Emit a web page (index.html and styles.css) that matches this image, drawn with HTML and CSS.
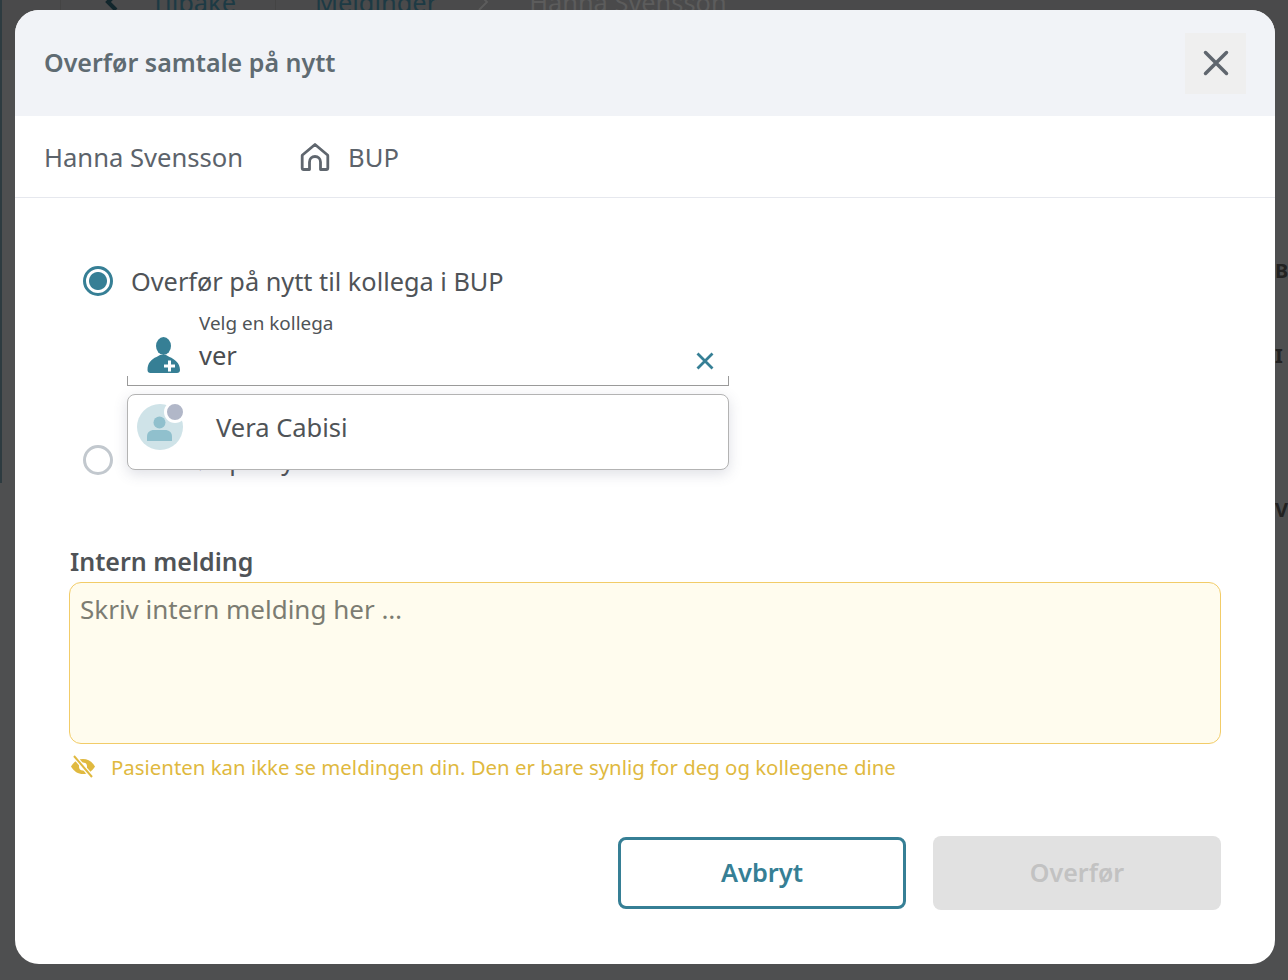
FILE: index.html
```html
<!DOCTYPE html>
<html lang="no">
<head>
<meta charset="utf-8">
<title>Overfør samtale på nytt</title>
<link rel="stylesheet" href="styles.css">
</head>
<body>
<div class="backdrop-page">
  <div class="topband"></div>
  <div class="rail"></div>
  <nav class="crumbs">
    <span class="crumb-back"><svg width="14" height="20" viewBox="0 0 14 20"><path d="M11 2 3 10l8 8" fill="none" stroke="#12262c" stroke-width="4"/></svg>Tilbake</span>
    <span>Meldinger</span>
    <svg width="14" height="20" viewBox="0 0 14 20"><path d="M3 2l8 8-8 8" fill="none" stroke="#5c5c5c" stroke-width="2"/></svg>
    <span class="crumb-muted">Hanna Svensson</span>
  </nav>
  <div class="side-glyphs"><span class="g1">Bi</span><span class="g2">I</span><span class="g3">V</span></div>
</div>
<div class="dialog">
  <header class="head">
    <h1 class="title">Overfør samtale på nytt</h1>
    <button class="close" aria-label="Lukk"><svg width="26" height="26" viewBox="0 0 26 26"><path d="M2.500 2.500l21 21M23.500 2.500l-21 21" stroke="#5f666e" stroke-width="3.500" stroke-linecap="round"/></svg></button>
  </header>
  <div class="info">
    <span class="patient">Hanna Svensson</span>
    <span class="unit"><svg width="30" height="30" viewBox="0 0 30 30"><path d="M15 2.500 27.500 13a1 1 0 0 1 .3.700V26a1.500 1.500 0 0 1-1.500 1.500H20.500V20a5.500 5.500 0 0 0-11 0v7.500H3.700A1.500 1.500 0 0 1 2.200 26V13.700a1 1 0 0 1 .3-.7z" fill="none" stroke="#5f666e" stroke-width="2.800" stroke-linejoin="round"/></svg>BUP</span>
  </div>
  <div class="body">
    <div class="options">
      <label class="option"><span class="radio on"></span><span>Overfør på nytt til kollega i BUP</span></label>
      <div class="picker">
        <div class="field">
          <svg class="doc" width="34" height="36" viewBox="0 0 34 36"><ellipse cx="16.500" cy="9" rx="7.500" ry="9" fill="#367f95"/><path d="M.5 33c0-7 4-11 9-13l3.500-2h6l3.500 2c5 2 10.500 6 10.500 13 0 1.800-1.200 3-3 3H3.500c-1.800 0-3-1.200-3-3z" fill="#367f95"/><path d="M22.500 23.500v11M17 29h11" stroke="#fff" stroke-width="3"/></svg>
          <div class="field-text"><span class="field-label">Velg en kollega</span><span class="field-value">ver</span></div>
          <svg class="clear" width="20" height="20" viewBox="0 0 20 20"><path d="M2.500 2.500l15 15M17.500 2.500l-15 15" stroke="#367f95" stroke-width="2.800"/></svg>
        </div>
        <div class="menu">
          <div class="avatar"><svg width="46" height="46" viewBox="0 0 46 46"><circle cx="23" cy="23" r="23" fill="#cfe3e8"/><circle cx="22.500" cy="18.500" r="6" fill="#90c0cd"/><path d="M10 37v-4c0-5 3-7 7-7h11c4 0 7 2 7 7v4z" fill="#90c0cd"/></svg><span class="status"></span></div>
          <span>Vera Cabisi</span>
        </div>
      </div>
      <label class="option second"><span class="radio"></span><span>Overfør på nytt til enhet</span></label>
    </div>
    <section class="note">
      <h2 class="note-title">Intern melding</h2>
      <textarea class="note-input" placeholder="Skriv intern melding her …"></textarea>
      <p class="note-hint"><svg width="26" height="26" viewBox="0 0 26 26"><path d="M1 12.500C4 7.500 8 5 13 5s9 2.500 12 7.500C22 17.500 18 20 13 20S4 17.500 1 12.500z" fill="#e0b93f"/><circle cx="13" cy="12.500" r="4" fill="#fff"/><path d="M4 2l18 21" stroke="#fff" stroke-width="4.500"/><path d="M4 2l18 21" stroke="#e0b93f" stroke-width="2"/></svg>Pasienten kan ikke se meldingen din. Den er bare synlig for deg og kollegene dine</p>
    </section>
    <div class="actions">
      <button class="btn ghost">Avbryt</button>
      <button class="btn off">Overfør</button>
    </div>
  </div>
</div>
</body>
</html>
```
FILE: styles.css
```css
* { box-sizing: border-box; }
html, body { margin: 0; height: 100%; }
body {
  width: 1288px;
  height: 980px;
  overflow: hidden;
  background: #4e4f50;
  font-family: "Noto Sans", "Open Sans", sans-serif;
  color: #4f5357;
  position: relative;
  padding: 10px 13px 16px 15px;
}
.backdrop-page { position: absolute; inset: 0; overflow: hidden; }
.topband { position: absolute; left: 0; top: 0; right: 0; height: 60px; background: #4a4a4b; }
.rail { position: absolute; left: 0; top: 0; bottom: 497px; width: 2px; background: #2d3b40; }
.crumbs {
  position: absolute; left: 60px; top: -10px; height: 24px;
  display: flex; align-items: center; gap: 39px;
  font-size: 25.400px; color: #1d3a44;
}
.crumb-back { display: flex; align-items: center; gap: 32px; padding: 0 39px 0 44px; border-left: 1px solid #444; border-right: 1px solid #444; }
.crumb-muted { color: #5c5c5c; }
.side-glyphs { position: absolute; left: 1275px; top: 0; font-size: 20px; color: #222; font-weight: 700; }
.side-glyphs span { position: absolute; left: 0; }
.g1 { top: 257px; }
.g2 { top: 342px; }
.g3 { top: 496px; }

.dialog {
  position: relative;
  width: 1260px;
  height: 954px;
  background: #fff;
  border-radius: 24px;
  overflow: hidden;
  display: flex;
  flex-direction: column;
}
.head {
  height: 106px;
  flex: none;
  background: #f1f3f7;
  display: flex;
  align-items: center;
  justify-content: space-between;
  padding: 0 29px;
}
.title { margin: 0 0 2px; font-size: 25px; line-height: 34px; font-weight: 600; color: #5f6b72; }
.close {
  width: 61px; height: 61px; padding: 0; border: 0; background: #efefef;
  display: flex; align-items: center; justify-content: center;
}
.info {
  height: 82px; flex: none;
  border-bottom: 1px solid #e6e8ee;
  display: flex; align-items: center; gap: 57px;
  padding: 2px 29px 0;
  font-size: 25.600px; color: #5c636b;
}
.unit { display: flex; align-items: center; gap: 18px; }
.unit svg { margin-top: -2px; }
.body { flex: 1; padding: 65px 54px 54px; display: flex; flex-direction: column; }
.options { position: relative; padding-left: 14px; height: 281px; flex: none; }
.option { display: flex; align-items: center; gap: 18px; font-size: 25.300px; line-height: 36px; color: #4f5357; }
.radio { width: 30px; height: 30px; border-radius: 50%; border: 3.500px solid #c2c8ce; flex: none; background: #fff; }
.radio.on { border-color: #367f95; background: radial-gradient(circle, #367f95 0 8.500px, #fff 9.500px); }
.picker { margin: 8px 0 0 44px; width: 602px; position: relative; z-index: 1; }
.field {
  height: 79px; position: relative;
  border-bottom: 1px solid #9a9a9a;
  display: flex; align-items: flex-end; padding: 0 14px 12px 20px;
}
.field::before, .field::after { content: ""; position: absolute; bottom: 0; width: 1px; height: 9px; background: #9a9a9a; }
.field::before { left: 0; }
.field::after { right: 0; }
.doc { flex: none; margin-right: 18px; }
.field-text { flex: 1; display: flex; flex-direction: column; }
.field-label { font-size: 18.900px; line-height: 26px; margin-bottom: 1px; }
.field-value { font-size: 25.500px; line-height: 36px; color: #4a4d50; }
.clear { flex: none; margin-bottom: 2px; }
.menu {
  height: 76px; margin-top: 8px;
  background: #fff;
  border: 1px solid #b3b3b3;
  border-radius: 8px;
  box-shadow: 0 4px 14px rgba(70, 80, 110, .18);
  display: flex; align-items: center; gap: 33px;
  padding: 0 9px 11px;
  font-size: 25.500px; color: #4f5357;
}
.avatar { position: relative; width: 46px; height: 46px; flex: none; margin-top: 1px; }
.avatar svg { display: block; }
.status { position: absolute; right: -3px; top: -3px; width: 22px; height: 22px; border-radius: 50%; background: #b1b7c8; border: 3px solid #fff; }
.second { position: absolute; left: 14px; top: 179px; }

.note { display: flex; flex-direction: column; }
.note-title { margin: 0 0 4px; padding-left: 1px; font-size: 25px; line-height: 34px; font-weight: 600; color: #4f5357; }
.note-input {
  display: block; width: 1152px; height: 162px; resize: none;
  padding: 9px 10px; margin: 0;
  background: #fffcee;
  border: 1px solid #f2cc68;
  border-radius: 12px;
  font: 26px/34px "Noto Sans", "Open Sans", sans-serif;
  color: #4f5357;
  outline: none;
}
.note-input::placeholder { color: #7c7c72; opacity: 1; }
.note-hint { margin: 8px 0 0; padding-left: 1px; display: flex; align-items: center; gap: 15px; font-size: 20.400px; line-height: 30px; color: #e0b93f; }
.actions { margin-top: auto; display: flex; justify-content: flex-end; gap: 27px; }
.btn { width: 288px; height: 74px; font: 600 25.400px "Noto Sans", "Open Sans", sans-serif; border-radius: 8px; padding: 0 0 2px; }
.ghost { background: #fff; color: #367f95; border: 3px solid #367f95; height: 72px; margin-top: 1px; }
.off { background: #e1e1e1; color: #c2c2c2; border: 0; font-size: 25px; }
```
